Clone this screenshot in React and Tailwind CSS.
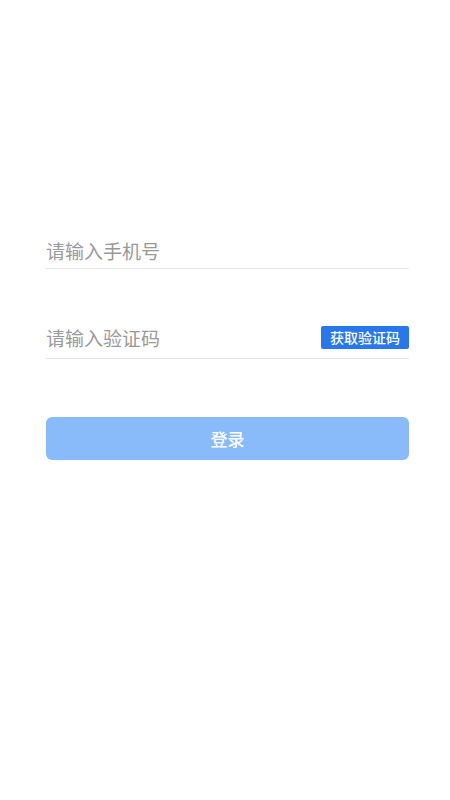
import React from 'react';

const App = () => {
  return (
    <div
      className="min-h-[800px] w-full bg-white pl-[46px] pr-[41px] pt-[235px]"
      style={{ fontFamily: '"Noto Sans CJK SC", "Noto Sans", sans-serif' }}
    >
      <div className="flex h-[34px] items-center border-b border-[#e6e6e6]">
        <input
          className="w-full bg-transparent text-[19px] text-[#333] outline-none placeholder:text-[#999]"
          placeholder="请输入手机号"
        />
      </div>
      <div className="mt-[50px] flex h-[40px] items-center border-b border-[#e6e6e6]">
        <input
          className="min-w-0 flex-1 bg-transparent text-[19px] text-[#333] outline-none placeholder:text-[#999]"
          placeholder="请输入验证码"
        />
        <button className="mt-[-2px] flex h-[23px] w-[88px] items-center justify-center rounded-[2px] bg-[#2878ec] text-[14px] font-medium text-white">
          获取验证码
        </button>
      </div>
      <button className="mt-[58px] flex h-[43px] w-full items-center justify-center rounded-[6px] bg-[#89bbfb] text-[17px] font-medium text-white">
        登录
      </button>
    </div>
  );
};

export default App;
